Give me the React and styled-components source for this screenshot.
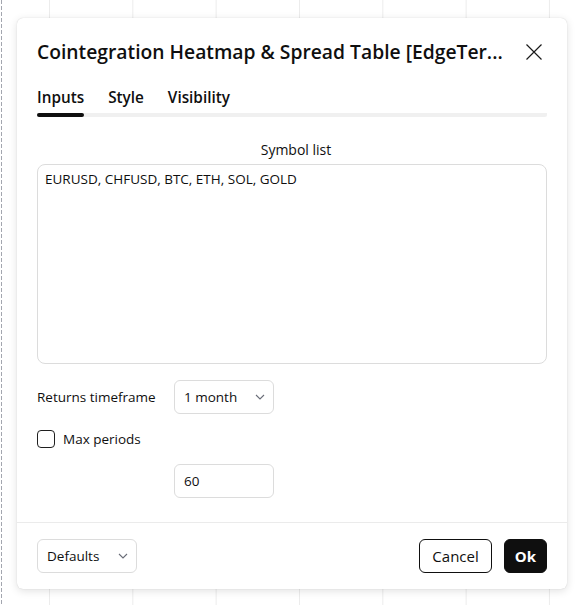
import React from "react";
import styled, { createGlobalStyle } from "styled-components";

const GlobalStyle = createGlobalStyle`
  html, body {
    margin: 0;
    padding: 0;
  }

  body {
    font-family: "Open Sans", "Noto Sans", sans-serif;
    color: #0f0f0f;
    background: #ffffff;
  }

  * {
    box-sizing: border-box;
  }
`;

const CloseIcon = () => (
  <svg width="18" height="18" viewBox="0 0 18 18" fill="none">
    <path d="M1.5 1.5l15 15M16.5 1.5l-15 15" stroke="#1a1a1a" strokeWidth="1.2" />
  </svg>
);

const Chevron = () => (
  <svg width="10" height="6" viewBox="0 0 10 6" fill="none">
    <path d="M1 1l4 4 4-4" stroke="#6a6d78" strokeWidth="1.1" />
  </svg>
);

const Select = ({ value }) => (
  <SelectBox type="button">
    <span>{value}</span>
    <Chevron />
  </SelectBox>
);

const Tabs = () => (
  <TabRow>
    <Tab $active>Inputs</Tab>
    <Tab>Style</Tab>
    <Tab>Visibility</Tab>
  </TabRow>
);

const App = () => {
  return (
    <>
      <GlobalStyle />
      <Page>
        <Dialog>
          <Header>
            <Title title="Cointegration Heatmap & Spread Table [EdgeTerminal]">
              Cointegration Heatmap &amp; Spread Table [EdgeTer...
            </Title>
            <CloseButton type="button" aria-label="Close">
              <CloseIcon />
            </CloseButton>
          </Header>

          <TabsWrapper>
            <Tabs />
          </TabsWrapper>

          <Body>
            <FieldLabel>Symbol list</FieldLabel>
            <SymbolArea
              readOnly
              defaultValue="EURUSD, CHFUSD, BTC, ETH, SOL, GOLD"
            />

            <FieldGrid>
              <Label>Returns timeframe</Label>
              <Select value="1 month" />

              <CheckRow>
                <CheckBox />
                <Label>Max periods</Label>
              </CheckRow>

              <NumberInput readOnly defaultValue="60" />
            </FieldGrid>
          </Body>

          <Footer>
            <FooterSelect>
              <Select value="Defaults" />
            </FooterSelect>
            <Actions>
              <Button type="button">Cancel</Button>
              <Button type="button" $primary>
                Ok
              </Button>
            </Actions>
          </Footer>
        </Dialog>
      </Page>
    </>
  );
};

export default App;

const Page = styled.div`
  min-height: 100vh;
  padding: 18px 16px 0 17px;
  background-image: linear-gradient(to bottom, #a3a6af 4px, transparent 4px),
    linear-gradient(to right, #ececec 1px, transparent 1px);
  background-size: 1px 6px, 83.33px 100%;
  background-position: 1px 0, 49px 0;
  background-repeat: repeat-y, repeat-x;
`;

const Dialog = styled.div`
  width: 550px;
  height: 571px;
  display: flex;
  flex-direction: column;
  background: #ffffff;
  border-radius: 6px;
  box-shadow: 0 2px 8px rgba(0, 0, 0, 0.12), 0 0 1px rgba(0, 0, 0, 0.2);
`;

const Header = styled.div`
  height: 68px;
  display: flex;
  align-items: center;
  gap: 8px;
  padding: 0 16px 0 20px;
`;

const Title = styled.h2`
  flex: 1;
  min-width: 0;
  margin: 0;
  font-size: 19.3px;
  line-height: 28px;
  font-weight: 600;
  white-space: nowrap;
`;

const CloseButton = styled.button`
  width: 34px;
  height: 34px;
  display: flex;
  align-items: center;
  justify-content: center;
  padding: 0;
  border: none;
  background: none;
`;

const TabsWrapper = styled.div`
  padding: 0 20px;
`;

const TabRow = styled.div`
  display: flex;
  gap: 24px;
  border-radius: 2px;
  background: linear-gradient(#f0f0f0, #f0f0f0) left bottom / 100% 4px no-repeat;
`;

const Tab = styled.div`
  display: flex;
  flex-direction: column;
  padding-top: 1px;
  font-size: 15.3px;
  line-height: 20px;
  font-weight: 600;

  &::after {
    content: "";
    height: 4px;
    margin-top: 6px;
    border-radius: 2px;
    background: ${(p) => (p.$active ? "#0f0f0f" : "transparent")};
  }
`;

const Body = styled.div`
  flex: 1;
  display: flex;
  flex-direction: column;
  padding: 24px 20px;
`;

const FieldLabel = styled.div`
  text-align: center;
  padding-left: 8px;
  font-size: 14px;
  line-height: 18px;
  margin-bottom: 5px;
`;

const SymbolArea = styled.textarea`
  height: 200px;
  width: 100%;
  resize: none;
  padding: 5px 7px;
  border: 1px solid #dcdcdc;
  border-radius: 8px;
  font-family: inherit;
  font-size: 13.5px;
  line-height: 18px;
  color: #0f0f0f;
  outline: none;
`;

const FieldGrid = styled.div`
  margin-top: 16px;
  display: grid;
  grid-template-columns: 137px 100px;
  grid-auto-rows: 34px;
  row-gap: 8px;
  align-items: center;
`;

const Label = styled.span`
  font-size: 13.5px;
  line-height: 18px;
`;

const SelectBox = styled.button`
  width: 100%;
  height: 34px;
  display: flex;
  align-items: center;
  justify-content: space-between;
  padding: 0 8px 0 9px;
  border: 1px solid #dcdcdc;
  border-radius: 6px;
  background: #ffffff;
  font-family: inherit;
  font-size: 13.5px;
  color: #0f0f0f;
`;

const CheckRow = styled.label`
  grid-column: 1 / -1;
  display: flex;
  align-items: center;
  gap: 8px;
`;

const CheckBox = styled.span`
  width: 18px;
  height: 18px;
  border: 1px solid #1f1f1f;
  border-radius: 4px;
`;

const NumberInput = styled.input`
  grid-column: 2;
  width: 100%;
  height: 34px;
  padding: 0 8px 0 9px;
  border: 1px solid #dcdcdc;
  border-radius: 6px;
  font-family: inherit;
  font-size: 13.5px;
  color: #0f0f0f;
  outline: none;
`;

const Footer = styled.div`
  display: flex;
  align-items: center;
  justify-content: space-between;
  padding: 16px 20px;
  border-top: 1px solid #ebebeb;
`;

const FooterSelect = styled.div`
  width: 100px;
`;

const Actions = styled.div`
  display: flex;
  gap: 12px;
`;

const Button = styled.button`
  height: 34px;
  padding: 0 ${(p) => (p.$primary ? 10 : 12)}px;
  border-radius: 6px;
  border: 1px solid #0f0f0f;
  background: ${(p) => (p.$primary ? "#0f0f0f" : "#ffffff")};
  color: ${(p) => (p.$primary ? "#ffffff" : "#0f0f0f")};
  font-family: inherit;
  font-size: 15px;
  font-weight: ${(p) => (p.$primary ? 700 : 400)};
`;
